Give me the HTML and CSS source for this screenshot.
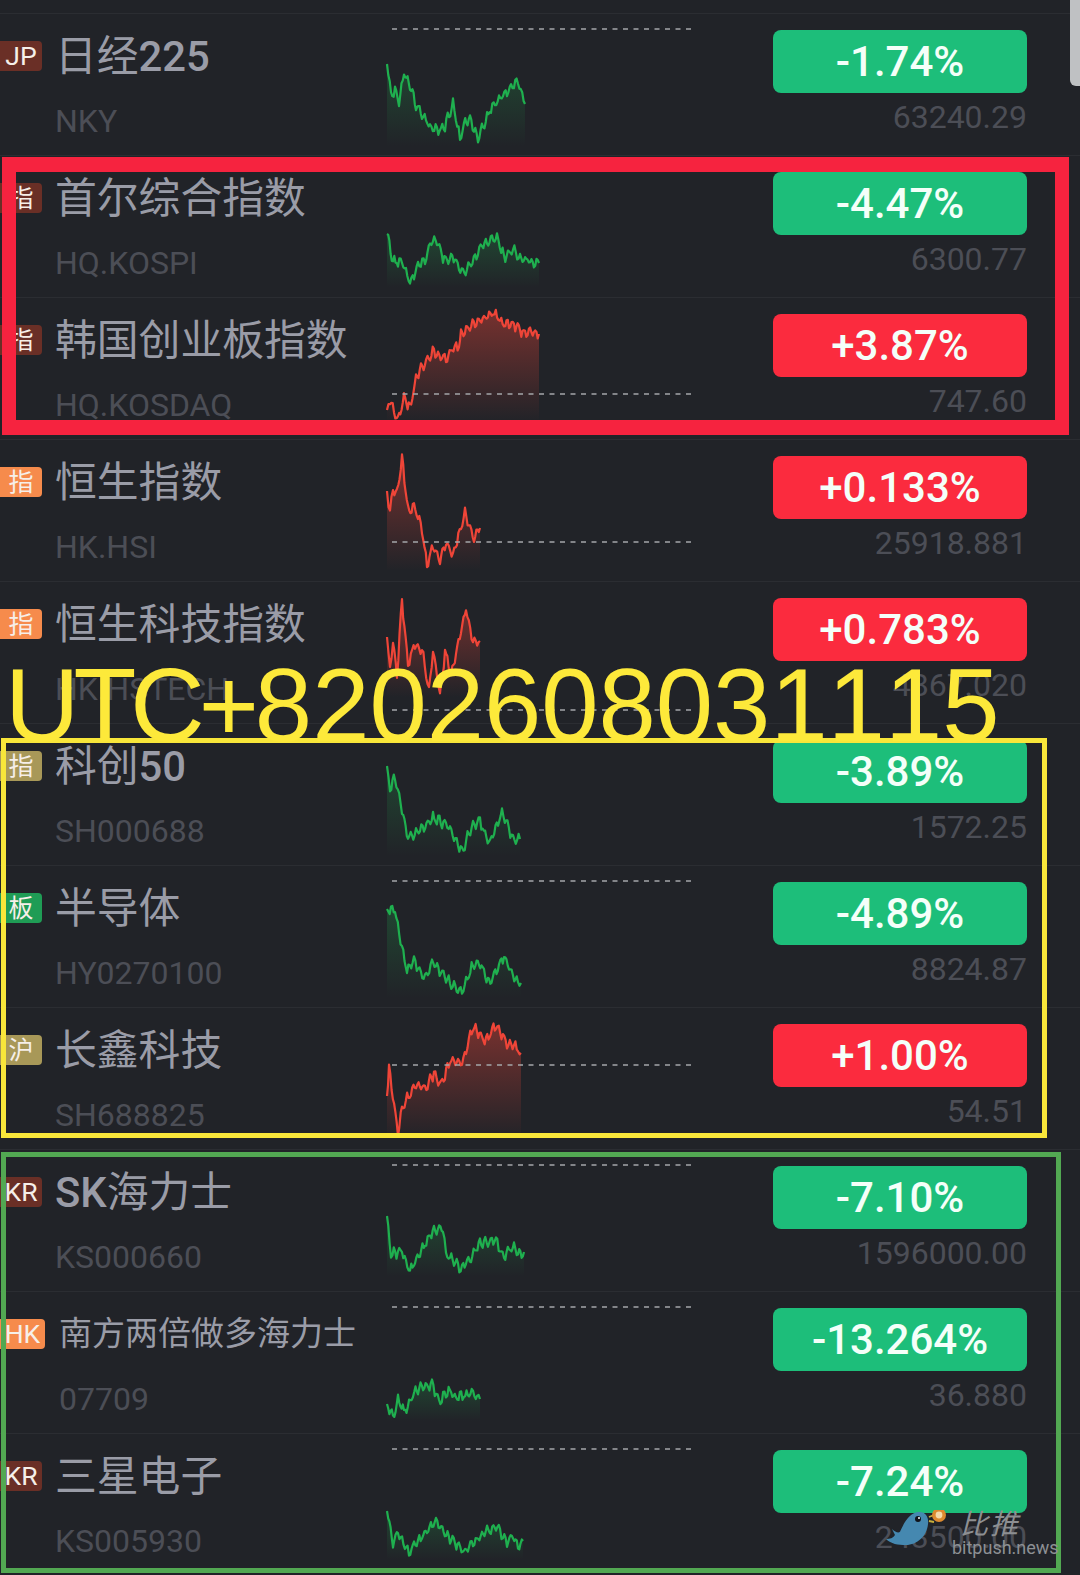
FILE: index.html
```html
<!DOCTYPE html>
<html lang="zh-CN">
<head>
  <meta charset="UTF-8" />
  <title>行情列表</title>
  <link rel="stylesheet" href="styles.css">
</head>
<body>
  <div class="screen">
    <div class="list">

      <div class="row">
        <div class="stock">
          <span class="tag tag-kr tag-latin">JP</span>
          <div class="info">
            <div class="name">日经<b>225</b></div>
            <div class="code">NKY</div>
          </div>
        </div>
        <svg class="spark" data-trend="down" data-points="2,50 6,80 10,76 14,86 19,60 25,70 31,92 37,100 45,112 52,116 60,112 68,90 75,125 79,110 85,105 93,124 106,94 122,77 133,67 140,90"></svg>
        <div class="quote">
          <div class="pct down">-1.74%</div>
          <div class="price">63240.29</div>
        </div>
      </div>

      <div class="row">
        <div class="stock">
          <span class="tag tag-kr">指</span>
          <div class="info">
            <div class="name">首尔综合指数</div>
            <div class="code">HQ.KOSPI</div>
          </div>
        </div>
        <svg class="spark" data-trend="down" data-points="2,78 8,105 13,106 17,105 25,127 33,109 40,105 45,88 52,83 58,102 70,103 78,118 86,108 97,90 112,80 119,102 128,93 135,102 154,107"></svg>
        <div class="quote">
          <div class="pct down">-4.47%</div>
          <div class="price">6300.77</div>
        </div>
      </div>

      <div class="row">
        <div class="stock">
          <span class="tag tag-kr">指</span>
          <div class="info">
            <div class="name">韩国创业板指数</div>
            <div class="code">HQ.KOSDAQ</div>
          </div>
        </div>
        <svg class="spark" data-trend="up" data-base="96" data-points="2,112 5,103 13,123 19,98 25,111 31,80 36,70 49,53 61,61 67,50 74,47 76,35 90,25 108,15 119,25 129,26 135,33 154,36"></svg>
        <div class="quote">
          <div class="pct up">+3.87%</div>
          <div class="price">747.60</div>
        </div>
      </div>

      <div class="row">
        <div class="stock">
          <span class="tag tag-hk">指</span>
          <div class="info">
            <div class="name">恒生指数</div>
            <div class="code">HK.HSI</div>
          </div>
        </div>
        <svg class="spark" data-trend="up" data-base="102" data-points="2,51 5,73 8,48 12,54 17,18 23,71 29,65 37,88 42,128 48,104 55,122 61,102 68,115 80,73 89,98 95,88"></svg>
        <div class="quote">
          <div class="pct up">+0.133%</div>
          <div class="price">25918.881</div>
        </div>
      </div>

      <div class="row">
        <div class="stock">
          <span class="tag tag-hk">指</span>
          <div class="info">
            <div class="name">恒生科技指数</div>
            <div class="code">HK.HSTECH</div>
          </div>
        </div>
        <svg class="spark" data-trend="up" data-base="128" data-points="2,55 5,90 8,58 12,92 17,19 23,82 30,61 37,68 44,108 48,69 55,112 60,69 66,92 81,27 88,59 95,59"></svg>
        <div class="quote">
          <div class="pct up">+0.783%</div>
          <div class="price">4867.020</div>
        </div>
      </div>

      <div class="row">
        <div class="stock">
          <span class="tag tag-star">指</span>
          <div class="info">
            <div class="name">科创<b>50</b></div>
            <div class="code">SH000688</div>
          </div>
        </div>
        <svg class="spark" data-trend="down" data-points="2,42 5,64 10,52 17,87 23,112 35,107 48,94 61,100 77,127 88,100 95,97 104,120 117,89 128,114 135,115"></svg>
        <div class="quote">
          <div class="pct down">-3.89%</div>
          <div class="price">1572.25</div>
        </div>
      </div>

      <div class="row">
        <div class="stock">
          <span class="tag tag-board">板</span>
          <div class="info">
            <div class="name">半导体</div>
            <div class="code">HY0270100</div>
          </div>
        </div>
        <svg class="spark" data-trend="down" data-points="2,43 10,45 17,82 22,105 29,95 40,112 47,95 61,112 77,128 88,98 94,95 104,118 119,90 133,118 136,117"></svg>
        <div class="quote">
          <div class="pct down">-4.89%</div>
          <div class="price">8824.87</div>
        </div>
      </div>

      <div class="row">
        <div class="stock">
          <span class="tag tag-star">沪</span>
          <div class="info">
            <div class="name">长鑫科技</div>
            <div class="code">SH688825</div>
          </div>
        </div>
        <svg class="spark" data-trend="up" data-base="57" data-points="2,88 4,61 13,125 17,100 31,75 40,81 49,65 56,77 65,53 77,55 88,18 101,33 111,16 122,36 129,37 136,45"></svg>
        <div class="quote">
          <div class="pct up">+1.00%</div>
          <div class="price">54.51</div>
        </div>
      </div>

      <div class="row">
        <div class="stock">
          <span class="tag tag-kr tag-latin">KR</span>
          <div class="info">
            <div class="name"><b>SK</b>海力士</div>
            <div class="code">KS000660</div>
          </div>
        </div>
        <svg class="spark" data-trend="down" data-points="2,66 6,104 17,101 25,121 40,94 49,79 58,79 61,104 77,119 95,94 111,91 119,106 129,96 133,104 139,102"></svg>
        <div class="quote">
          <div class="pct down">-7.10%</div>
          <div class="price">1596000.00</div>
        </div>
      </div>

      <div class="row">
        <div class="stock">
          <span class="tag tag-hk tag-wide tag-latin">HK</span>
          <div class="info info-small">
            <div class="name">南方两倍做多海力士</div>
            <div class="code">07709</div>
          </div>
        </div>
        <svg class="spark" data-trend="down" data-points="2,112 8,126 13,109 19,119 33,96 47,92 54,109 65,99 71,106 88,101 95,107"></svg>
        <div class="quote">
          <div class="pct down">-13.264%</div>
          <div class="price">36.880</div>
        </div>
      </div>

      <div class="row">
        <div class="stock">
          <span class="tag tag-kr tag-latin">KR</span>
          <div class="info">
            <div class="name">三星电子</div>
            <div class="code">KS005930</div>
          </div>
        </div>
        <svg class="spark" data-trend="down" data-points="2,77 8,109 13,99 24,119 33,107 51,88 65,105 79,117 97,100 111,92 122,107 128,102 133,112 138,107"></svg>
        <div class="quote">
          <div class="pct down">-7.24%</div>
          <div class="price">243500.00</div>
        </div>
      </div>

    </div>

    <div class="scroll-thumb"></div>

    <!-- marks drawn over the screenshot -->
    <div class="mark mark-red"></div>
    <div class="mark mark-yellow"></div>
    <div class="mark mark-green"></div>
    <div class="stamp"><span class="stamp-zone">UTC+</span>8202608031115</div>

    <div class="watermark">
      <svg class="bird" viewBox="0 0 66 44">
        <path d="M2 29 C6 29 9 28 11 25 C10 23 9 21 8 19 C11 22 14 23 16 22 C20 12 26 3 34 2 C42 1 45 8 44 14 C43 26 33 35 22 35 C14 35 7 34 2 29 Z" fill="#4588b0"/>
        <circle cx="34" cy="9" r="3" fill="#10131a"/>
        <circle cx="35" cy="8" r="1" fill="#fff"/>
        <path d="M45 7 L50 5 M45 11 L50 12" stroke="#c9b03a" stroke-width="1.8"/>
        <circle cx="55" cy="5" r="7" fill="#dd8a2f"/>
        <circle cx="55" cy="5" r="3.4" fill="#f5d9a8"/>
      </svg>
      <div class="wm-text">
        <div class="wm-cn">比推</div>
        <div class="wm-en">bitpush.news</div>
      </div>
    </div>
  </div>

  <script src="chart.js"></script>
</body>
</html>
```

FILE: styles.css
```css
/* Base */
* { box-sizing: border-box; margin: 0; padding: 0; }
body { background: #212328; font-family: Roboto, 'Noto Sans CJK SC', sans-serif; }
.screen { position: relative; width: 1080px; height: 1575px; overflow: hidden; background: #212328; }

/* List */
.list { padding-top: 13px; }
.row { display: grid; grid-template-columns: 385px 320px 1fr; height: 142px; border-top: 1px solid #2b2d32; }
.stock { display: flex; align-items: flex-start; }

.tag { flex: none; width: 42px; height: 30px; margin-top: 27px; border-radius: 0 4px 4px 0; color: #f6efe9; font-size: 25px; line-height: 27px; text-align: center; font-family: 'Noto Sans CJK SC', sans-serif; }
.tag-latin { font-family: Roboto, sans-serif; font-size: 26.5px; line-height: 30px; }
.tag-wide { width: 45px; }
.tag-kr { background: #6a2f26; }
.tag-hk { background: #f68b4c; }
.tag-star { background: #a89858; }
.tag-board { background: #1f9c55; }

.info { margin-left: 13px; }
.name { height: 42px; margin-top: 18px; color: #9a9ca7; font-size: 41.8px; line-height: 42px; white-space: nowrap; font-family: 'Noto Sans CJK SC', sans-serif; }
.name b { font-family: Roboto, sans-serif; font-weight: 500; }
.info-small { margin-left: 14px; }
.info-small .name { font-size: 33px; }
.code { margin-top: 29px; color: #4c4e56; font-size: 32px; line-height: 36px; white-space: nowrap; }

.spark { display: block; width: 320px; height: 142px; overflow: visible; }

.quote { display: flex; flex-direction: column; align-items: flex-end; padding: 16px 53px 0 0; }
.pct { width: 254px; height: 63px; border-radius: 8px; color: #f4fff9; font-size: 42px; font-weight: 500; line-height: 63px; text-align: center; }
.down { background: #1dbe7a; }
.up { background: #fb2b3e; }
.price { margin-top: 6px; color: #4c4e56; font-size: 32px; line-height: 36px; }

.scroll-thumb { position: absolute; top: 0; right: 0; width: 10px; height: 86px; border-radius: 0 0 0 6px; background: #bfc1c3; }

/* Annotations */
.mark { position: absolute; }
.mark-red { left: 2px; top: 157px; width: 1067px; height: 278px; border: 15px solid #f6233f; border-left-width: 14px; border-right-width: 14px; }
.mark-yellow { left: 1px; top: 738px; width: 1046px; height: 400px; border: 5px solid #f8e63a; }
.mark-green { left: 1px; top: 1152px; width: 1060px; height: 421px; border: 5px solid #52a852; }
.stamp { position: absolute; left: 5px; top: 647px; color: #fde93a; font-family: 'Liberation Sans', sans-serif; font-size: 103px; font-kerning: none; line-height: 117px; white-space: nowrap; }
.stamp-zone { letter-spacing: -6px; margin-right: 2px; }

/* Watermark */
.watermark { position: absolute; left: 884px; top: 1506px; display: flex; }
.bird { display: block; width: 66px; height: 44px; margin-top: 4px; }
.wm-text { margin-left: 4px; }
.wm-cn { color: #8d8f92; font-size: 28px; line-height: 32px; font-style: italic; font-family: 'Noto Sans CJK SC', sans-serif; margin-left: 6px; letter-spacing: 2px; }
.wm-en { color: #8d9094; font-size: 18px; line-height: 20px; margin-left: -2px; }
```

FILE: chart.js
```js
// draws the sparklines from the key points in data-points
const NS = 'http://www.w3.org/2000/svg';
const COLORS = { up: '#ef4538', down: '#1fb04f' };
let gradId = 0;

function el(name, attrs) {
  const node = document.createElementNS(NS, name);
  for (const key in attrs) node.setAttribute(key, attrs[key]);
  return node;
}

// fixed wobble and noise so the line looks like tick data, same on every load
function roughen(keys, seed) {
  const out = [];
  let n = seed;
  for (let i = 0; i < keys.length - 1; i++) {
    const [x0, y0] = keys[i];
    const [x1, y1] = keys[i + 1];
    const steps = Math.max(1, Math.round((x1 - x0) / 1.3));
    for (let s = 0; s < steps; s++) {
      const t = s / steps;
      const x = x0 + (x1 - x0) * t;
      n++;
      const hash = Math.sin(n * 12.9898) * 43758.5453;
      const noise = (hash - Math.floor(hash) - 0.5) * 5 + Math.sin(x * 1.1 + seed) * 4;
      out.push([x, y0 + (y1 - y0) * t + (i === 0 && s === 0 ? 0 : noise)]);
    }
  }
  out.push(keys[keys.length - 1]);
  return out;
}

document.querySelectorAll('.spark').forEach((svg, index) => {
  const keys = svg.dataset.points.split(' ').map(p => p.split(',').map(Number));
  const points = roughen(keys, 137 + index * 71);
  const color = COLORS[svg.dataset.trend];
  const top = svg.dataset.trend === 'up' ? 0.42 : 0.25;
  const id = 'fade' + gradId++;
  const line = points.map(p => p[0].toFixed(1) + ',' + p[1].toFixed(1)).join(' ');
  const first = points[0][0];
  const last = points[points.length - 1][0];
  const ys = points.map(p => p[1]);

  svg.setAttribute('viewBox', '0 0 320 142');

  const defs = el('defs', {});
  const grad = el('linearGradient', { id, gradientUnits: 'userSpaceOnUse', x1: 0, y1: Math.min(...ys), x2: 0, y2: Math.max(...ys) + 4 });
  grad.append(
    el('stop', { offset: 0, 'stop-color': color, 'stop-opacity': top }),
    el('stop', { offset: 1, 'stop-color': color, 'stop-opacity': 0 })
  );
  defs.append(grad);
  svg.append(defs);

  svg.append(el('polygon', { points: `${first},${Math.max(...ys) + 4} ${line} ${last},${Math.max(...ys) + 4}`, fill: `url(#${id})` }));
  svg.append(el('polyline', { points: line, fill: 'none', stroke: color, 'stroke-width': 2.2, 'stroke-linejoin': 'round' }));

  const base = svg.dataset.base || 15;
  svg.append(el('line', { x1: 7, x2: 310, y1: base, y2: base, stroke: '#a4a6a9', 'stroke-width': 1.5, 'stroke-dasharray': '5 5.5' }));
});
```
